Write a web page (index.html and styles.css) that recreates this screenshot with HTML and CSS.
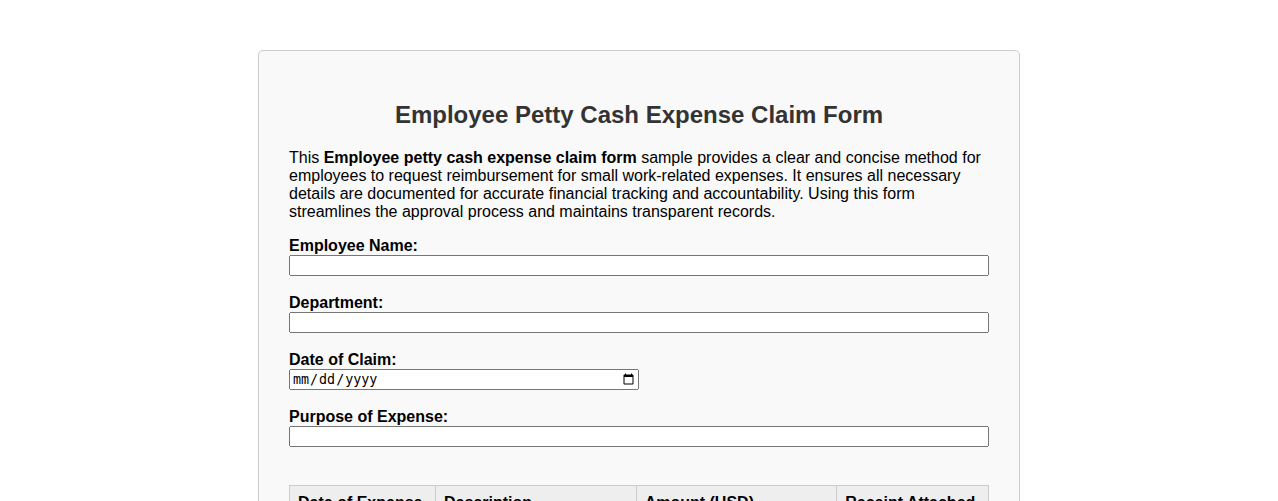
FILE: index.html
```html
<!DOCTYPE html>
<html>
<head>
<meta charset="utf-8">
<title>Employee Petty Cash Expense Claim Form</title>
<link rel="stylesheet" href="styles.css">
</head>
<body>
<div class="card">
  <h1 class="title">Employee Petty Cash Expense Claim Form</h1>
  <p class="intro">This <strong>Employee petty cash expense claim form</strong> sample provides a clear and concise method for employees to request reimbursement for small work-related expenses. It ensures all necessary details are documented for accurate financial tracking and accountability. Using this form streamlines the approval process and maintains transparent records.</p>
  <div class="field">
    <label class="label" for="name">Employee Name:</label>
    <input class="text-input" type="text" id="name">
  </div>
  <div class="field">
    <label class="label" for="dept">Department:</label>
    <input class="text-input" type="text" id="dept">
  </div>
  <div class="field">
    <label class="label" for="date">Date of Claim:</label>
    <input class="date-input" type="date" id="date">
  </div>
  <div class="field">
    <label class="label" for="purpose">Purpose of Expense:</label>
    <input class="text-input" type="text" id="purpose">
  </div>
  <table class="expenses">
    <thead>
      <tr>
        <th class="col-date">Date of Expense</th>
        <th class="col-desc">Description</th>
        <th class="col-amt">Amount (USD)</th>
        <th class="col-rcpt">Receipt Attached</th>
      </tr>
    </thead>
    <tbody>
      <tr>
        <td><input class="cell-input" type="date"></td>
        <td><input class="cell-input" type="text"></td>
        <td><input class="cell-input" type="number"></td>
        <td><input type="checkbox"></td>
      </tr>
    </tbody>
  </table>
</div>
</body>
</html>
```
FILE: styles.css
```css
html, body {
  margin: 0;
  padding: 0;
  background: #ffffff;
}

body {
  font-family: "Liberation Sans", Arial, sans-serif;
  color: #000;
}

.card {
  box-sizing: border-box;
  width: 762px;
  margin: 50px auto 40px;
  padding: 30px;
  background: #f9f9f9;
  border: 1px solid #cccccc;
  border-radius: 5px;
}

.title {
  margin: 20px 0 20px;
  font-size: 24px;
  font-weight: bold;
  color: #333333;
  text-align: center;
}

.intro {
  margin: 0 0 16px;
  font-size: 16px;
  line-height: 18px;
}

.field {
  margin-bottom: 18px;
}

.label {
  display: block;
  font-weight: bold;
  font-size: 16px;
  line-height: 18px;
  margin: 0;
}

.text-input {
  display: block;
  box-sizing: border-box;
  width: 100%;
  height: 21px;
  margin: 0;
}

.date-input {
  display: block;
  box-sizing: border-box;
  width: 350px;
  height: 21px;
  margin: 0;
}

.expenses {
  margin-top: 38px;
  width: 100%;
  border-collapse: collapse;
}

.expenses th,
.expenses td {
  border: 1px solid #cccccc;
  padding: 8px;
  text-align: left;
  font-size: 16px;
}

.expenses th {
  background: #eeeeee;
  font-weight: bold;
}

.col-date { width: 146px; box-sizing: border-box; }
.col-desc { width: 201px; box-sizing: border-box; }
.col-amt { width: 201px; box-sizing: border-box; }
.col-rcpt { width: 152px; box-sizing: border-box; }

.cell-input {
  box-sizing: border-box;
  width: 100%;
}
```
